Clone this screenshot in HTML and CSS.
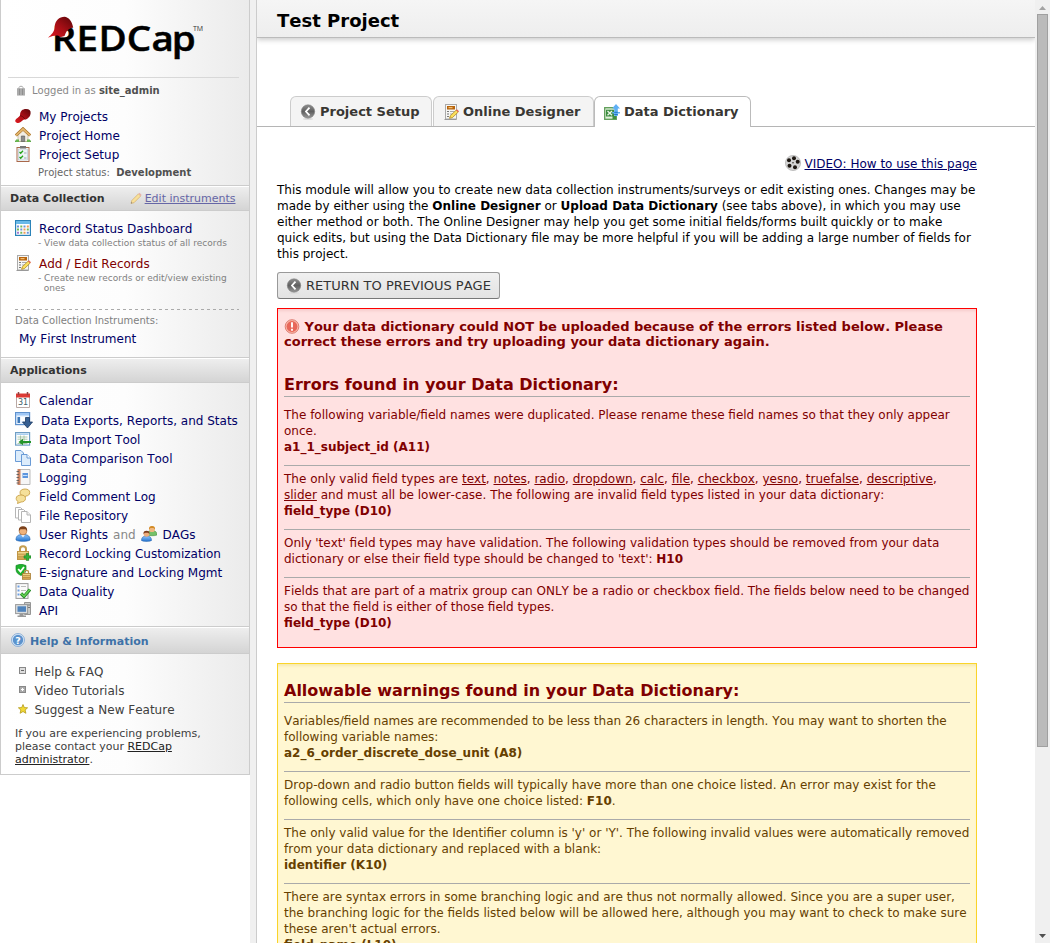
FILE: index.html
```html
<!DOCTYPE html>
<html lang="en">
<head>
<meta charset="utf-8">
<title>REDCap - Test Project</title>
<link rel="stylesheet" href="styles.css">
</head>
<body>
<svg width="0" height="0" class="defs">
  <defs>
    <linearGradient id="gRed" x1="0" y1="1" x2="1" y2="0"><stop offset="0" stop-color="#e01a20"/><stop offset=".5" stop-color="#a80f16"/><stop offset="1" stop-color="#5a0508"/></linearGradient>
    <linearGradient id="gGray" x1="0" y1="0" x2="0" y2="1"><stop offset="0" stop-color="#8d8d8d"/><stop offset=".5" stop-color="#606060"/><stop offset="1" stop-color="#999"/></linearGradient>
    <linearGradient id="gGold" x1="0" y1="0" x2="0" y2="1"><stop offset="0" stop-color="#f6dd93"/><stop offset="1" stop-color="#d2a04a"/></linearGradient>
    <linearGradient id="gBlue" x1="0" y1="0" x2="0" y2="1"><stop offset="0" stop-color="#8fc4fa"/><stop offset="1" stop-color="#2273cf"/></linearGradient>
    <symbol id="i-cap" viewBox="0 0 16 16"><path d="M5 7.500C5 3 7.500 1 11 1c3.500 0 5 1.500 4.600 4.500-.3 2.500-1.600 4-3.600 5.500-2 .8-3 .3-4.500 1.500C5.500 14 4.500 15.500 2.300 15 .8 14.700 0 13.500.3 12.300.8 10.500 4 9.500 5 7.500z" fill="url(#gRed)"/><path d="M5 7.700c1.500 0 3.800 1.300 5 3.500" fill="none" stroke="#6d070b"/></symbol>
    <symbol id="i-home" viewBox="0 0 16 16"><path d="M0 13.500h16V15H0z" fill="#5ea84a"/><path d="M3 7.500 8 3l5 4.500V14.500H3z" fill="#f1ede3" stroke="#b7a98c" stroke-width=".7"/><path d="M6.300 9h3.400v5.500H6.300z" fill="#8b8b8b" stroke="#555" stroke-width=".6"/><path d="M.8 8.500 8 1.800l7.200 6.700" fill="none" stroke="#a87127" stroke-width="3"/><path d="M1 8.300 8 2l7 6.300" fill="none" stroke="#e3b66d" stroke-width="1.700"/><path d="M1 12.500h3V15H1zM12 12.500h3V15h-3z" fill="#69b64f"/></symbol>
    <symbol id="i-clip" viewBox="0 0 16 16"><rect x="2" y="1.500" width="12" height="14" fill="#fff" stroke="#a9684a"/><rect x="3.500" y="3" width="9" height="11" fill="#edf3f6" stroke="#aebfca" stroke-width=".6"/><path d="M5 0h6v2.500H5z" fill="#777"/><path d="m4.500 6 1.200 1.200L8 4.700M4.500 11l1.200 1.200L8 9.700" fill="none" stroke="#28a41c" stroke-width="1.300"/><path d="M9 7h2.500M9 12h2.500" stroke="#9aa8b0"/></symbol>
    <symbol id="i-lock" viewBox="0 0 10 11"><path d="M3 4V2.500C3 .8 7 .8 7 2.500V4" fill="none" stroke="#aaa"/><path d="M1 3.500h8V10H1z" fill="#c4c4c4"/><path d="M1 4h8M1 6h8M1 8h8M1 10h8M3.500 4v6M6.500 4v6" stroke="#888" stroke-width=".8"/></symbol>
    <symbol id="i-pencil" viewBox="0 0 12 12"><path d="m1 11 .8-3L8.500 1.300l2.200 2.200L4 10.200z" fill="#f8e09a" stroke="#d2aa68" stroke-width=".7"/><path d="m8.500 1.300 1-1 2.200 2.200-1 1z" fill="#e8b0a8"/><path d="m1 11 .4-1.400 1 1z" fill="#777"/></symbol>
    <symbol id="i-grid" viewBox="0 0 16 16"><rect x=".6" y=".6" width="14.800" height="14.800" fill="#fff" stroke="#2b83b9" stroke-width="1.200"/><path d="M1 1h14v3H1z" fill="#6ab9e8"/><g fill="#6c93d8"><path d="M2 5.500h2v2H2zM8.500 5.500h2v2h-2zM5.300 8.500h2v2h-2zM11.800 11.700h2v2h-2z"/></g><g fill="#76b958"><path d="M5.300 5.500h2v2h-2zM2 8.500h2v2H2zM11.800 8.500h2v2h-2zM5.300 11.700h2v2h-2z"/></g><g fill="#f09a53"><path d="M11.800 5.500h2v2h-2zM8.500 8.500h2v2h-2zM8.500 11.700h2v2h-2z"/></g><path d="M2 11.700h2v2H2z" fill="#a879ce"/></symbol>
    <symbol id="i-form" viewBox="0 0 16 16"><rect x="2.500" y=".5" width="11" height="14.500" fill="#f6f6f4" stroke="#aaa"/><path d="M1.500 15.500h12" stroke="#999"/><path d="M4 2h8v3.500H4z" fill="#b8640d"/><path d="M5.500 3.700h4" stroke="#ffd38a"/><path d="M4 7.500h2M4 10h2M4 12.500h2" stroke="#777"/><path d="M7 7.500h4.500M7 10h4M7 12.500h2" stroke="#aaa"/><path d="m6.500 14.300.9-2.600L13.300 6l2 2-6 5.700z" fill="#fbe05d" stroke="#a57d18" stroke-width=".7"/><path d="m13 6.200 1-1 2 2-1 1z" fill="#e86a5a"/></symbol>
    <symbol id="i-cal" viewBox="0 0 16 16"><path d="M1.500 4h13v11.500h-13z" fill="#fff" stroke="#b9a9a5"/><path d="M1 1.500h14v4H1z" fill="#dc3a35"/><path d="M3.500 0v3M12.500 0v3" stroke="#8e4343" stroke-width="1.500"/><text x="8" y="13.300" font-size="8" text-anchor="middle" fill="#3d6068" font-family="DejaVu Sans">31</text></symbol>
    <symbol id="i-export" viewBox="0 0 18 17"><rect x=".6" y=".6" width="14" height="12" fill="#e8f3ff" stroke="#5e91cd" stroke-width="1.200"/><path d="M1 1h13v2.500H1z" fill="#9fc7f5"/><path d="M2.500 5h2.500v6H2.500z" fill="#3f79b8"/><path d="M6 5h7v4H6z" fill="#fff"/><path d="M10.500 5.500h4V10h3L12.500 16 7.500 10h3z" fill="#365f92" stroke="#1d3b63" stroke-width=".8"/></symbol>
    <symbol id="i-import" viewBox="0 0 16 16"><rect x=".6" y="1.600" width="14" height="12.500" fill="#fff" stroke="#6f9ec4" stroke-width="1.200"/><path d="M1.500 2.500h12V4h-12z" fill="#a8cff0"/><path d="M2.500 6h10M2.500 8.200h10M2.500 12.500h10M5.500 4.500v9M9 4.500v9" stroke="#9bbc9b" stroke-width=".8"/><path d="M3.500 11 8 7.700v2.200h8v2.200H8v2.200z" fill="#25952b"/></symbol>
    <symbol id="i-copy" viewBox="0 0 16 16"><g fill="#dcecfb" stroke="#6a9bd6"><path d="M.5.500H6L8.500 3v8.500h-8z"/><path d="M6.500 4.500H12L15.500 8v7.500h-9z"/><path d="M12 4.500V8h3.500" fill="#fff"/></g></symbol>
    <symbol id="i-log" viewBox="0 0 16 16"><path d="M3.500.500h11.500v15H3.500z" fill="#f6f6f6" stroke="#bbb"/><path d="M2.500 0h3v16h-3z" fill="#c98263"/><path d="M1.500 2.500h2.500M1.500 5.500h2.500M1.500 8.500h2.500M1.500 11.500h2.500M1.500 14h2.500" stroke="#5e5e5e" stroke-width=".9"/><path d="M7.500 4H13v5H7.500z" fill="#5d96de"/><path d="M8 6.500h4.500" stroke="#c7e0fb"/></symbol>
    <symbol id="i-bubble" viewBox="0 0 16 16"><g fill="#f5e09a" stroke="#c9a14a" stroke-width=".9"><path d="M5 5C4.800 2.500 7 1 10 1c3 0 4.700 1.300 4.700 3.500 0 2.300-1.800 3.500-3.700 3.500L8 10l.3-2C6.500 7.500 5.200 6.500 5 5z"/><path d="M1.200 10.500C1.200 8.300 3 7 6 7c3 0 4.500 1.200 4.500 3.500S8.500 14 6 14l-3.500 1.500.5-2c-1-.5-1.800-1.600-1.800-3z"/></g></symbol>
    <symbol id="i-files" viewBox="0 0 16 16"><g fill="#fff" stroke="#b5b5b5"><path d="M.5.500h5l2 2V11h-7z"/><path d="M3.500 2.500h5l2 2V13h-7z"/><path d="M6.500 4.500H12L15.500 8v7.500h-9z"/><path d="M12 4.500V8h3.500" fill="#eee"/></g></symbol>
    <symbol id="i-user" viewBox="0 0 16 16"><path d="M1 14c0-4 2-5.500 7-5.500s7 1.500 7 5.500c-2 1.700-12 1.700-14 0z" fill="url(#gBlue)" stroke="#2565b0" stroke-width=".7"/><path d="m6 8.500 2 3 2-3z" fill="#fff"/><circle cx="8" cy="5" r="3.900" fill="#efb27b" stroke="#8a4e21" stroke-width=".5"/><path d="M3.900 5C3.500 2 5 .3 8 .3S12.500 2 12.100 5L10.500 3.300H5.500z" fill="#7b421c"/></symbol>
    <symbol id="i-users" viewBox="0 0 16 16"><path d="M6 8.500c0-2.500 1.500-4 5-4s5 1.500 5 4.500c-2 1-8 1-10 0z" fill="#75c067" stroke="#3a8430" stroke-width=".5"/><circle cx="11" cy="3.200" r="2.900" fill="#f0b780"/><path d="M8 3.500C7.800 1 9 0 11 0s3.300 1 3 3.500L12.500 2h-3z" fill="#d28a24"/><path d="M.5 14.500c0-3 1.500-4.500 5-4.500s5 1.500 5 4.500c-2 1.200-8 1.200-10 0z" fill="url(#gBlue)" stroke="#2565b0" stroke-width=".6"/><circle cx="5.500" cy="7.800" r="2.900" fill="#edac7b"/><path d="M2.500 8c-.2-2.500 1-3.300 3-3.300S8.700 5.500 8.500 8L7 6.700H4z" fill="#7b3b1d"/></symbol>
    <symbol id="i-lockadd" viewBox="0 0 16 16"><path d="M5 7V4c0-3.700 6-3.700 6 0v3" fill="none" stroke="#c39d50" stroke-width="2"/><rect x="2.500" y="6.500" width="11" height="8" fill="url(#gGold)" stroke="#c09545"/><path d="M3 9.200h10M3 11.800h10" stroke="#b38c3f" stroke-width=".8"/><path d="M11.300 8.500h2.400v2.300H16v2.400h-2.300v2.300h-2.400v-2.300H9v-2.400h2.300z" fill="#32b53a" stroke="#15751c" stroke-width=".5"/></symbol>
    <symbol id="i-esign" viewBox="0 0 16 16"><path d="M1 1.500 6 0l5 1.500v4C11 9 8 10.500 6 11.500 4 10.500 1 9 1 5.500z" fill="#1fb32d" stroke="#16872a" stroke-width=".7"/><path d="m3.200 5 2.300 2.500L9 3" fill="none" stroke="#fff" stroke-width="1.800"/><path d="M9.500 9.500V8c0-2.300 4-2.300 4 0v1.500" fill="none" stroke="#bb924c" stroke-width="1.200"/><rect x="7.500" y="9.500" width="8" height="5.800" fill="url(#gGold)" stroke="#a97c32" stroke-width=".8"/><path d="M8 11.500h7M8 13.500h7" stroke="#a97c32" stroke-width=".6"/></symbol>
    <symbol id="i-quality" viewBox="0 0 16 16"><rect x="1" y=".6" width="12" height="14.800" fill="#fafafa" stroke="#999"/><path d="M2.500 2.500h2v2h-2zM2.500 6.500h2v2h-2zM2.500 10.500h2v2h-2z" fill="#6d9de0"/><path d="M6 3.500h5M6 7.500h5M6 11.500h5" stroke="#bbb"/><path d="m6 10.500 3 3 6-7" fill="none" stroke="#238627" stroke-width="3.200"/><path d="m6.200 10.500 2.800 2.800 5.800-6.700" fill="none" stroke="#65d152" stroke-width="1.600"/></symbol>
    <symbol id="i-api" viewBox="0 0 16 16"><path d="M9.500.5h6v12h-6z" fill="#c9cbc9" stroke="#959595"/><path d="M10 3h5M10 5.500h5" stroke="#777"/><rect x=".6" y="2.600" width="12" height="9" fill="#d9dddf" stroke="#999"/><path d="M2.500 4.300H11v5.500H2.500z" fill="#4f83bc"/><path d="M4.500 12h4v1.500H11V15H2.500v-1.500h2z" fill="#999"/></symbol>
    <symbol id="i-help" viewBox="0 0 14 14"><circle cx="7" cy="7" r="6.500" fill="#d9e8f8" stroke="#7ba3d0" stroke-width=".8"/><circle cx="7" cy="7" r="5.200" fill="#5c93cd"/><text x="7" y="10.500" font-size="9.500" font-weight="bold" font-family="DejaVu Sans" text-anchor="middle" fill="#fff">?</text></symbol>
    <symbol id="i-minus" viewBox="0 0 7 7"><rect x=".5" y=".5" width="6" height="6" fill="#ddd" stroke="#888"/><path d="M2 3.500h3" stroke="#666"/></symbol>
    <symbol id="i-plus" viewBox="0 0 7 7"><rect x=".5" y=".5" width="6" height="6" fill="#aaa" stroke="#888"/><path d="M2 3.500h3M3.500 2v3" stroke="#fff"/></symbol>
    <symbol id="i-star" viewBox="0 0 10 10"><path d="m5 .5 1.300 3.100 3.300.2-2.500 2.200.8 3.300L5 7.500 2.100 9.300l.8-3.300L.4 3.800l3.300-.2z" fill="#f2d934" stroke="#b49a1a" stroke-width=".8"/></symbol>
    <symbol id="i-back" viewBox="0 0 16 16"><ellipse cx="8" cy="14.900" rx="5" ry="1" fill="#ddd"/><circle cx="8" cy="7.500" r="6.700" fill="url(#gGray)" stroke="#808080" stroke-width=".6"/><path d="M9.500 3.700 6 7.500l3.500 3.800" fill="none" stroke="#fff" stroke-width="1.800"/></symbol>
    <symbol id="i-excel" viewBox="0 0 16 16"><rect x=".7" y="3.700" width="11.600" height="11.600" fill="#e2f1dc" stroke="#5c9c56" stroke-width="1.300"/><path d="M8.500 12h3.500v3H8.500z" fill="#3d8f40"/><path d="M2 5.700h8v6.800H2z" fill="#3c8d40"/><path d="m3.500 7 4.500 4.200M8 7l-4.500 4.200" stroke="#e9f6e6" stroke-width="1.300"/><path d="M12 0l4 4.500h-2.200V8H16v1.500h-2.200V12h-3.600V9.500H8.200V8h2V4.500H8z" fill="#5fb0f5"/><path d="M10.200 8.300h3.600M10.200 10.500h3.600" stroke="#2277c5"/></symbol>
    <symbol id="i-reel" viewBox="0 0 16 16"><circle cx="8" cy="8" r="7.600" fill="#d4d4d4" stroke="#a5a5a5" stroke-width=".6"/><g fill="#1c1611"><circle cx="9" cy="3.300" r="2"/><circle cx="4" cy="5.200" r="2"/><circle cx="12.700" cy="6.800" r="2"/><circle cx="4.500" cy="10.800" r="2"/><circle cx="10" cy="12.200" r="2"/><circle cx="8" cy="7.700" r=".7"/></g></symbol>
    <symbol id="i-alert" viewBox="0 0 16 16"><circle cx="8" cy="8" r="7.300" fill="#f9b8a8" stroke="#d4645a" stroke-width=".8"/><circle cx="8" cy="8" r="5.800" fill="#e8675a"/><path d="M8 3.500v5.500M8 10.500v2" stroke="#fff" stroke-width="2"/></symbol>
  </defs>
</svg>
<div class="page">
  <div class="side">
    <div class="menu intro">
      <div class="brand">
        <svg class="logo" width="170" height="60" viewBox="0 0 170 60">
          <g class="logo-type" transform="scale(1.1 1)"><text x="3.500 26 46 71.500 94 112.500" y="35">REDCap</text></g>
          <text class="logo-tm" x="145" y="15">TM</text>
          <path d="M0 25C4 21 7 19 7.500 13.500 8 5 13 1 19 1c4.500.5 8.500 4.500 10 12.500-2 0-3 .5-4.500 1.500-2.500 1.500-4 3.500-5.500 8l-5 1.500c-1-2.500-6-3-14 .5z" transform="scale(.87)" fill="url(#gRed)"/>
        </svg>
      </div>
      <div class="login"><svg width="10" height="11"><use href="#i-lock"/></svg><span>Logged in as <b>site_admin</b></span></div>
      <div class="row"><svg><use href="#i-cap"/></svg><a>My Projects</a></div>
      <div class="row"><svg><use href="#i-home"/></svg><a>Project Home</a></div>
      <div class="row"><svg><use href="#i-clip"/></svg><a>Project Setup</a></div>
      <div class="status">Project status:&nbsp; <b>Development</b></div>
    </div>
    <div class="bar">Data Collection<span class="edit"><svg width="12" height="12"><use href="#i-pencil"/></svg><u>Edit instruments</u></span></div>
    <div class="menu collect">
      <div class="row"><svg><use href="#i-grid"/></svg><a>Record Status Dashboard</a></div>
      <div class="sub">- View data collection status of all records</div>
      <div class="row"><svg><use href="#i-form"/></svg><a class="current">Add / Edit Records</a></div>
      <div class="sub">- Create new records or edit/view existing<br>&nbsp; ones</div>
      <div class="instr">Data Collection Instruments:</div>
      <div class="row first"><a>My First Instrument</a></div>
    </div>
    <div class="bar">Applications</div>
    <div class="menu apps">
      <div class="row"><svg><use href="#i-cal"/></svg><a>Calendar</a></div>
      <div class="row wide"><svg class="export"><use href="#i-export"/></svg><a>Data Exports, Reports, and Stats</a></div>
      <div class="row"><svg><use href="#i-import"/></svg><a>Data Import Tool</a></div>
      <div class="row"><svg><use href="#i-copy"/></svg><a>Data Comparison Tool</a></div>
      <div class="row"><svg><use href="#i-log"/></svg><a>Logging</a></div>
      <div class="row"><svg><use href="#i-bubble"/></svg><a>Field Comment Log</a></div>
      <div class="row"><svg><use href="#i-files"/></svg><a>File Repository</a></div>
      <div class="row"><svg><use href="#i-user"/></svg><a>User Rights</a><span class="and">and</span><svg class="dag"><use href="#i-users"/></svg><a>DAGs</a></div>
      <div class="row"><svg><use href="#i-lockadd"/></svg><a>Record Locking Customization</a></div>
      <div class="row"><svg><use href="#i-esign"/></svg><a>E-signature and Locking Mgmt</a></div>
      <div class="row"><svg><use href="#i-quality"/></svg><a>Data Quality</a></div>
      <div class="row"><svg><use href="#i-api"/></svg><a>API</a></div>
    </div>
    <div class="bar help"><svg width="14" height="14"><use href="#i-help"/></svg><span>Help &amp; Information</span></div>
    <div class="menu info">
      <div class="hrow"><i><svg width="7" height="7"><use href="#i-minus"/></svg></i>Help &amp; FAQ</div>
      <div class="hrow"><i><svg width="7" height="7"><use href="#i-plus"/></svg></i>Video Tutorials</div>
      <div class="hrow"><i><svg width="10" height="10"><use href="#i-star"/></svg></i>Suggest a New Feature</div>
      <p>If you are experiencing problems,<br>please contact your <u>REDCap</u><br><u>administrator</u>.</p>
    </div>
  </div>
  <div class="gutter"></div>
  <div class="main">
    <h1>Test Project</h1>
    <div class="tabs">
      <div class="tab t1"><svg><use href="#i-back"/></svg>Project Setup</div>
      <div class="tab t2"><svg><use href="#i-form"/></svg>Online Designer</div>
      <div class="tab t3"><svg><use href="#i-excel"/></svg>Data Dictionary</div>
    </div>
    <div class="content">
      <div class="video"><svg><use href="#i-reel"/></svg><u>VIDEO: How to use this page</u></div>
      <p class="lead">This module will allow you to create new data collection instruments/surveys or edit existing ones. Changes may be<br>made by either using the <b>Online Designer</b> or <b>Upload Data Dictionary</b> (see tabs above), in which you may use<br>either method or both. The Online Designer may help you get some initial fields/forms built quickly or to make<br>quick edits, but using the Data Dictionary file may be more helpful if you will be adding a large number of fields for<br>this project.</p>
      <button class="return"><svg><use href="#i-back"/></svg>RETURN TO PREVIOUS PAGE</button>
      <div class="box red">
        <div class="alert"><svg><use href="#i-alert"/></svg> Your data dictionary could NOT be uploaded because of the errors listed below. Please<br>correct these errors and try uploading your data dictionary again.</div>
        <h2>Errors found in your Data Dictionary:</h2>
        <p class="top">The following variable/field names were duplicated. Please rename these field names so that they only appear<br>once.<br><b>a1_1_subject_id (A11)</b></p>
        <p>The only valid field types are <u>text</u>, <u>notes</u>, <u>radio</u>, <u>dropdown</u>, <u>calc</u>, <u>file</u>, <u>checkbox</u>, <u>yesno</u>, <u>truefalse</u>, <u>descriptive</u>,<br><u>slider</u> and must all be lower-case. The following are invalid field types listed in your data dictionary:<br><b>field_type (D10)</b></p>
        <p>Only 'text' field types may have validation. The following validation types should be removed from your data<br>dictionary or else their field type should be changed to 'text': <b>H10</b></p>
        <p>Fields that are part of a matrix group can ONLY be a radio or checkbox field. The fields below need to be changed<br>so that the field is either of those field types.<br><b>field_type (D10)</b></p>
      </div>
      <div class="box yellow">
        <h2>Allowable warnings found in your Data Dictionary:</h2>
        <p class="top">Variables/field names are recommended to be less than 26 characters in length. You may want to shorten the<br>following variable names:<br><b>a2_6_order_discrete_dose_unit (A8)</b></p>
        <p>Drop-down and radio button fields will typically have more than one choice listed. An error may exist for the<br>following cells, which only have one choice listed: <b>F10</b>.</p>
        <p>The only valid value for the Identifier column is 'y' or 'Y'. The following invalid values were automatically removed<br>from your data dictionary and replaced with a blank:<br><b>identifier (K10)</b></p>
        <p>There are syntax errors in some branching logic and are thus not normally allowed. Since you are a super user,<br>the branching logic for the fields listed below will be allowed here, although you may want to check to make sure<br>these aren't actual errors.<br><b>field_name (L10)</b></p>
      </div>
    </div>
  </div>
  <div class="scroll">
    <svg width="15" height="14"><path d="M4 10h7L7.500 6z" fill="#a3a3a3"/></svg>
    <div class="thumb"></div>
    <svg width="15" height="14"><path d="M4 5h7L7.500 9z" fill="#505050"/></svg>
  </div>
</div>
</body>
</html>
```
FILE: styles.css
```css
* { box-sizing: border-box; }
body { margin: 0; height: 943px; overflow: hidden; background: #fff; font-family: "DejaVu Sans", sans-serif; font-size: 12px; font-kerning: none; color: #000; white-space: nowrap; }
svg { width: 16px; height: 16px; flex: none; }
svg[width] { width: auto; height: auto; }
svg.defs { position: absolute; width: 0; height: 0; }
p, h1, h2 { margin: 0; }
.page { display: flex; height: 943px; overflow: hidden; }

.side { width: 250px; height: 775px; border: solid #ccc; border-width: 0 1px 1px; background: linear-gradient(to right, #fff 0, #fdfdfd 50%, #ebebeb 100%); }
.gutter { width: 7px; background: #f0f0f0; border: solid #ccc; border-width: 0 1px 0 0; }
.menu { overflow: hidden; }
.row { display: flex; align-items: center; height: 19px; padding-left: 14px; gap: 8px; color: #000066; }
.row svg { margin-bottom: 1px; }
.current { color: #800000; }
.intro { height: 185px; }
.brand { height: 78px; margin: 0 10px 0 7px; border-bottom: 1px solid #d8d8d8; }
.brand .logo { display: block; width: 170px; height: 60px; transform: translate(40px, 16px); }
.logo-type { font: 600 35px "Open Sans", sans-serif; fill: #000; stroke: #000; stroke-width: .5; }
.logo-tm { font: 7px "Open Sans", sans-serif; fill: #333; }
.login { display: flex; align-items: center; height: 25px; margin-bottom: 4px; padding-left: 15px; gap: 6px; font-size: 10px; color: #888; }
.login b, .status b { color: #505050; }
.status { height: 18px; line-height: 18px; padding-left: 37px; font-size: 10px; color: #666; }

.bar { display: flex; align-items: center; height: 26px; padding-left: 9px; border: solid #ccc; border-width: 1px 0; background: linear-gradient(#fff 0 1px, #eee 1px, #d4d4d4); font-size: 11px; font-weight: bold; color: #333; }
.edit { display: flex; gap: 3px; margin-left: 25px; font-weight: normal; color: #6666a6; }
.collect { height: 146px; padding-top: 8px; }
.sub { height: 16px; padding-left: 37px; font-size: 9px; line-height: 10px; color: #808080; }
.row + .sub + .row + .sub { height: 36px; }
.instr { margin: 0 10px 0 14px; height: 20px; padding-top: 5px; background: repeating-linear-gradient(to right, #aaa 0 3px, transparent 3px 6px) top / 100% 1px no-repeat; font-size: 10px; line-height: 13px; color: #808080; }
.row.first { padding-left: 18px; }
.apps { height: 243px; padding-top: 8px; }
.apps .wide { height: 20px; padding-top: 1px; }
.apps .export { width: 18px; height: 17px; }
.and { margin: 0 -1px 0 -3px; color: #888; }
.dag { margin-left: -2px; margin-right: -2px; }
.bar.help { height: 28px; padding-left: 10px; gap: 5px; color: #3e72a8; }
.help span { padding-top: 2px; }
.info { padding-top: 8px; color: #404040; }
.hrow { display: flex; align-items: center; height: 19px; padding-left: 16px; }
.hrow i { display: flex; justify-content: center; width: 11px; margin: 0 6.500px 2px 0; }
.info p { padding: 8px 0 0 14px; font-size: 11px; line-height: 13px; }
.info u { color: #222; }

.main { width: 778px; height: 943px; overflow: hidden; }
h1 { height: 38px; padding: 0 20px; border-bottom: 1px solid #bbb; background: linear-gradient(#f5f5f5, #eee); box-shadow: 0 2px 5px rgba(0,0,0,.2); font-size: 18px; line-height: 41px; }
.tabs { display: flex; height: 31px; margin-top: 58px; padding-left: 33px; background: linear-gradient(#b5b5b5, #b5b5b5) bottom / 100% 1px no-repeat; }
.tab { display: flex; align-items: center; height: 30px; gap: 4px; padding-left: 9px; border: 1px solid #ccc; border-bottom: 0; border-radius: 6px 6px 0 0; background: #f4f4f4; font-size: 13px; font-weight: bold; color: #393733; }
.t1 { width: 142px; }
.t2 { width: 161px; margin: 0 0 0 1px; }
.t3 { width: 157px; height: 31px; padding-bottom: 1px; background: #fff; border-color: #bbb; }
.content { width: 720px; padding-left: 20px; }
.video { display: flex; justify-content: flex-end; align-items: center; gap: 4px; height: 19px; margin-top: 27px; color: #000066; }
.video svg { margin-bottom: 1px; }
.lead { padding-top: 9px; line-height: 16px; }
.return { display: flex; align-items: center; gap: 4px; width: 223px; height: 27px; margin: 10px 0 9px; padding: 0 8px; border: 1px solid #999; border-bottom-color: #777; border-radius: 3px; background: linear-gradient(#f0f0f0, #e9e9e9 50%, #e3e3e3); font: 13px "DejaVu Sans", sans-serif; font-kerning: none; color: #333; white-space: nowrap; }
.box { width: 700px; padding: 10px 6px; border: 1px solid; line-height: 16px; }
.red { height: 340px; border-color: #f00; background: #ffe1e1; box-shadow: inset 0 3px 3px -1px #f6cccc; color: #800000; }
.yellow { height: 400px; margin-top: 15px; border-color: #fad42a; background: #fff7d2; box-shadow: inset 0 3px 3px -1px #f6e9ae; color: #664000; }
.alert { height: 56px; font-size: 13px; font-weight: bold; line-height: 15px; }
.alert svg { height: 15px; vertical-align: top; }
.box h2 { height: 22px; border-bottom: 1px solid #aaa; font-size: 16px; line-height: 20px; color: #800000; }
.yellow h2 { margin-top: 7px; }
.box p { margin-top: 10px; padding-top: 5px; border-top: 1px solid #aaa; }
.box p.top { border: 0; padding: 0; }

.scroll { display: flex; flex-direction: column; width: 15px; height: 943px; background: #f0f0f0; }
.scroll svg { display: block; }
.scroll svg:last-child { margin-top: auto; }
.thumb { width: 11px; height: 733px; margin-left: 2px; border: 1px solid #a0a0a0; background: #bbb; }
```
